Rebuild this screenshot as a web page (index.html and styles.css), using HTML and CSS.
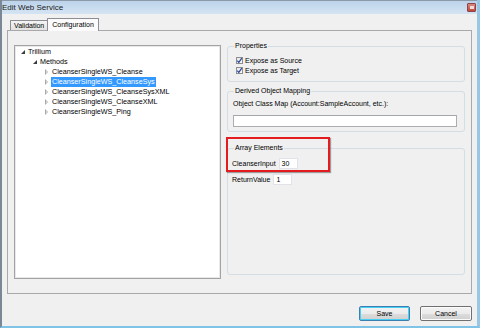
FILE: index.html
```html
<!DOCTYPE html>
<html>
<head>
<meta charset="utf-8">
<link rel="stylesheet" href="styles.css">
</head>
<body>
<div class="window">
  <div class="titlebar">
    <span class="title">Edit Web Service</span>
    <span class="close"><span class="close-glyph"></span></span>
  </div>
  <div class="content">
    <div class="tabs">
      <div class="tab">Validation</div>
      <div class="tab selected">Configuration</div>
    </div>
    <div class="page">
      <div class="tree">
        <div class="node lvl0"><span class="exp"></span>Trillium</div>
        <div class="node lvl1"><span class="exp"></span>Methods</div>
        <div class="node lvl2"><span class="col"></span><span class="lbl">CleanserSingleWS_Cleanse</span></div>
        <div class="node lvl2"><span class="col"></span><span class="lbl sel">CleanserSingleWS_CleanseSys</span></div>
        <div class="node lvl2"><span class="col"></span><span class="lbl">CleanserSingleWS_CleanseSysXML</span></div>
        <div class="node lvl2"><span class="col"></span><span class="lbl">CleanserSingleWS_CleanseXML</span></div>
        <div class="node lvl2"><span class="col"></span><span class="lbl">CleanserSingleWS_Ping</span></div>
      </div>
      <div class="side">
        <fieldset class="group props">
          <legend>Properties</legend>
          <div class="check-row"><span class="cb"><svg viewBox="0 0 7 7" width="7" height="7"><path d="M1.3 3.6 L2.8 5.4 L5.8 1.2" fill="none" stroke="#2b4a9c" stroke-width="1.2"/></svg></span>Expose as Source</div>
          <div class="check-row"><span class="cb"><svg viewBox="0 0 7 7" width="7" height="7"><path d="M1.3 3.6 L2.8 5.4 L5.8 1.2" fill="none" stroke="#2b4a9c" stroke-width="1.2"/></svg></span>Expose as Target</div>
        </fieldset>
        <fieldset class="group derived">
          <legend>Derived Object Mapping</legend>
          <div class="field-label">Object Class Map (Account:SampleAccount, etc.):</div>
          <div class="textbox wide"></div>
        </fieldset>
        <fieldset class="group array">
          <legend>Array Elements</legend>
          <div class="arr-row"><span class="arr-label">CleanserInput</span><span class="textbox small">30</span></div>
          <div class="arr-row"><span class="arr-label">ReturnValue</span><span class="textbox small">1</span></div>
          <div class="highlight"></div>
        </fieldset>
      </div>
    </div>
    <div class="buttons">
      <div class="btn default">Save</div>
      <div class="btn">Cancel</div>
    </div>
  </div>
</div>
</body>
</html>
```

FILE: styles.css
```css
* { box-sizing: border-box; }
html, body {
  margin: 0;
  padding: 0;
  width: 480px;
  height: 328px;
  overflow: hidden;
  background: #f0f0f0;
  font-family: "Liberation Sans", Arial, sans-serif;
  font-size: 7px;
  color: #000;
}
.window {
  width: 480px;
  height: 328px;
  display: flex;
  flex-direction: column;
  border-left: 2px solid #7a8796;
  border-right: 3px solid #98c6e4;
  border-bottom: 2px solid #7fc3e6;
  background: #f0f0f0;
}
.titlebar {
  height: 14px;
  flex: none;
  display: flex;
  align-items: center;
  justify-content: space-between;
  border-top: 1px solid #8c9aa8;
  background: linear-gradient(#bcd3ea, #d5e4f3);
  padding: 0 1px 0 0;
}
.title {
  font-size: 8px;
  color: #1a1a1a;
}
.close {
  width: 9px;
  height: 9px;
  border: 1px solid #8e4444;
  border-radius: 1px;
  background: linear-gradient(#d98a80, #c0473c);
  display: flex;
  align-items: center;
  justify-content: center;
}
.close-glyph {
  width: 4px;
  height: 3px;
  background: #f3dcd8;
}
.content {
  flex: 1;
  display: flex;
  flex-direction: column;
  padding: 4px 5px 5px 5px;
}
.tabs {
  height: 12px;
  flex: none;
  display: flex;
  align-items: flex-end;
  padding-left: 3px;
}
.tab {
  height: 10px;
  line-height: 9px;
  padding: 0 3px;
  border: 1px solid #8c8e94;
  border-bottom: none;
  background: linear-gradient(#f4f4f4, #e3e3e3);
  border-radius: 1px 1px 0 0;
}
.tab.selected {
  height: 13px;
  line-height: 11px;
  margin-bottom: -1px;
  margin-left: -1px;
  padding: 0 4px;
  background: #fbfbfb;
  position: relative;
  z-index: 1;
}
.page {
  height: 264px;
  flex: none;
  border: 1px solid #a9a9a9;
  background: #f0f0f0;
  display: flex;
  padding: 10px 6px 14px 6px;
  gap: 6px;
}
.tree {
  width: 207px;
  margin-top: 4px;
  background: #fff;
  border: 1px solid #a3a3a3;
  box-shadow: inset 0 0 0 1px #e8e8e8;
  padding-top: 1px;
}
.node {
  height: 10px;
  line-height: 10px;
  display: flex;
  align-items: center;
  white-space: nowrap;
  font-size: 7.2px;
}
.lvl0 { padding-left: 4px; }
.lvl1 { padding-left: 16px; }
.lvl2 { padding-left: 28px; }
.exp, .col {
  width: 9px;
  height: 10px;
  flex: none;
  position: relative;
}
.exp::before {
  content: "";
  position: absolute;
  left: 2px;
  top: 3px;
  border-style: solid;
  border-width: 0 0 4px 4px;
  border-color: transparent transparent #3a3a3a transparent;
}
.col::before {
  content: "";
  position: absolute;
  left: 2px;
  top: 2px;
  border-style: solid;
  border-width: 3px 0 3px 3px;
  border-color: transparent transparent transparent #a8a8a8;
}
.col::after {
  content: "";
  position: absolute;
  left: 3px;
  top: 3.5px;
  border-style: solid;
  border-width: 1.5px 0 1.5px 1.5px;
  border-color: transparent transparent transparent #ffffff;
}
.lbl { padding: 0 1px; margin-left: -1px; }
.lbl.sel {
  background: #3399ff;
  color: #fff;
}
.side {
  flex: 1;
  display: flex;
  flex-direction: column;
}
.group {
  margin: 0;
  border: 1px solid #d5dde4;
  border-radius: 3px;
  padding: 0 6px 0 5px;
  min-width: 0;
}
.group legend {
  padding: 0 1px;
  margin-left: 1px;
  line-height: 10px;
  height: 10px;
}
.props { padding-top: 4px; padding-bottom: 6px; }
.check-row {
  height: 10px;
  display: flex;
  align-items: center;
  margin-left: 3px;
}
.cb {
  width: 7px;
  height: 7px;
  border: 1px solid #8e8f8f;
  background: linear-gradient(#e8e8e8, #fafafa);
  margin-right: 2px;
  display: flex;
  position: relative;
}
.cb svg { position: absolute; left: -1px; top: -1px; }
.derived { margin-top: 4px; padding-top: 3px; padding-bottom: 4px; }
.field-label { height: 10px; line-height: 10px; margin-bottom: 6px; }
.textbox {
  background: #fff;
  border: 1px solid #abadb3;
  border-top-color: #a3a6ad;
}
.textbox.wide { height: 12px; margin-right: 1px; }
.array {
  flex: 1;
  margin-top: 11px;
  margin-bottom: 4px;
  padding-top: 5px;
  position: relative;
}
.arr-row {
  height: 11px;
  display: flex;
  align-items: center;
  margin-bottom: 5px;
  margin-left: -1px;
}
.arr-label { margin-right: 3px; }
.textbox.small {
  width: 19px;
  height: 11px;
  line-height: 9px;
  padding-left: 2px;
  border-color: #e2e3ea;
}
.highlight {
  position: absolute;
  left: -2px;
  top: -16px;
  width: 104px;
  height: 35px;
  border: 2px solid #e41b1f;
  box-shadow: 1px 1px 1px rgba(0,0,0,0.35);
}
.buttons {
  flex: none;
  margin-top: 12px;
  height: 15px;
  display: flex;
  justify-content: flex-end;
  gap: 10px;
}
.btn {
  width: 52px;
  height: 15px;
  border: 1px solid #707070;
  border-radius: 2px;
  background: linear-gradient(#f3f3f3 0%, #ebebeb 50%, #dddddd 51%, #cfcfcf 100%);
  box-shadow: inset 0 0 0 1px #fbfbfb;
  display: flex;
  align-items: center;
  justify-content: center;
}
.btn.default {
  width: 51px;
  border-color: #3c7fb1;
  box-shadow: inset 0 0 0 1px #48d0f4;
}
```
